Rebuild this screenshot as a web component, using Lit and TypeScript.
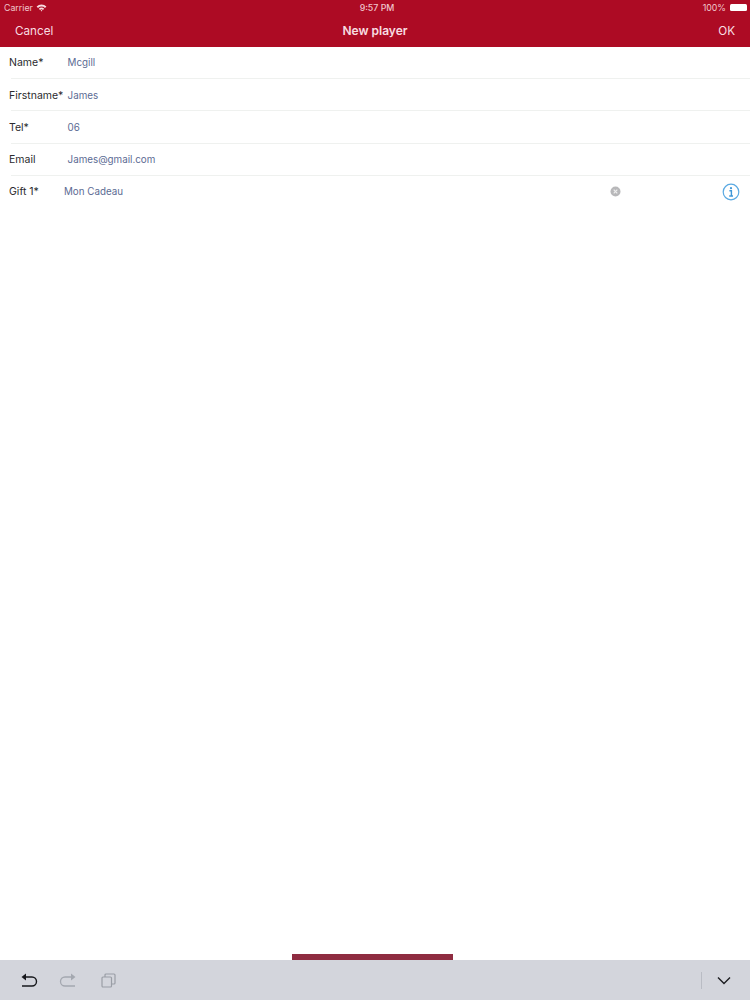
import { LitElement, html, css } from "lit";
import { customElement } from "lit/decorators.js";

const rows = [
  ["Name*", "Mcgill"],
  ["Firstname*", "James"],
  ["Tel*", "06"],
  ["Email", "James@gmail.com"],
];

@customElement("app-root")
export class AppRoot extends LitElement {
  static styles = css`
    :host {
      display: flex;
      flex-direction: column;
      height: 1000px;
      width: 750px;
      background: #fff;
      font-family: Inter, "Liberation Sans", sans-serif;
      overflow: hidden;
    }
    .header {
      background: #ad0b24;
      height: 47px;
      box-sizing: border-box;
      color: #f8dde1;
      display: flex;
      flex-direction: column;
    }
    .status {
      height: 15px;
      padding: 0 2px 0 4px;
      display: flex;
      align-items: center;
      font-size: 8.8px;
      position: relative;
      justify-content: space-between;
      color: #f0c6cc;
    }
    .status-left, .status-right { display: flex; align-items: center; gap: 3px; }
    .clock {
      position: absolute;
      left: 4px;
      right: 0;
      text-align: center;
      font-weight: 500;
    }
    .battery {
      width: 17px;
      height: 7px;
      background: #fff;
      border-radius: 1.5px;
      margin-left: 1px;
      margin-right: 1px;
    }
    .nav {
      flex: 1;
      display: flex;
      align-items: center;
      justify-content: space-between;
      padding: 0 15px 1px 15px;
      font-size: 11.7px;
      position: relative;
    }
    .title {
      position: absolute;
      left: 0;
      right: 0;
      text-align: center;
      font-weight: 600;
      font-size: 12px;
    }
    .form { flex: 1; padding-top: 0.1px; }
    .row {
      height: 32.2px;
      display: flex;
      align-items: center;
      font-size: 10.5px;
      position: relative;
      box-sizing: border-box;
      padding-left: 9px;
      padding-bottom: 0.6px;
    }
    .row.line::after {
      content: "";
      position: absolute;
      left: 11px;
      right: 0;
      bottom: 0;
      height: 1px;
      background: #eff1ef;
    }
    .label { width: 58.6px; color: #2a2a2e; flex: none; }
    .value { color: #5b6b93; font-size: 9.8px; }
    .gift .label { width: 55px; }
    .clear { position: absolute; left: 610px; top: 10px; }
    .info { position: absolute; left: 722px; top: 7px; }
    .toolbar {
      height: 40px;
      background: #d3d5dc;
      position: relative;
      display: flex;
      align-items: center;
      padding: 0 19px 0 20px;
      gap: 22px;
    }
    .handle {
      position: absolute;
      left: 292px;
      bottom: 100%;
      width: 161px;
      height: 6px;
      background: #8f2c41;
    }
    .spacer { flex: 1; }
    .divider { width: 1px; height: 17px; background: #b9bcc4; margin-right: -7px; }
    .redo { margin-left: -1px; }
    .copy { margin-left: 2px; }
    svg { display: block; fill: none; }
  `;

  render() {
    return html`
      <div class="header">
        <div class="status">
          <div class="status-left">
            <span>Carrier</span>
            <svg width="11" height="8" viewBox="0 0 11 8">
              <path d="M0.6 2.6 A7 7 0 0 1 10.4 2.6 L9 4 A5 5 0 0 0 2 4 Z" fill="#f9dde1"></path>
              <path d="M2.8 4.7 A4 4 0 0 1 8.2 4.7 L7 5.9 A2.4 2.4 0 0 0 4 5.9 Z" fill="#f9dde1"></path>
              <path d="M4.6 6.5 A1.3 1.3 0 0 1 6.4 6.5 L5.5 7.6 Z" fill="#f9dde1"></path>
            </svg>
          </div>
          <div class="clock">9:57 PM</div>
          <div class="status-right">
            <span>100%</span>
            <div class="battery"></div>
          </div>
        </div>
        <div class="nav">
          <span>Cancel</span>
          <span class="title">New player</span>
          <span>OK</span>
        </div>
      </div>
      <div class="form">
        ${rows.map(
          ([l, v]) => html`<div class="row line">
            <span class="label">${l}</span><span class="value">${v}</span>
          </div>`
        )}
        <div class="row gift">
          <span class="label">Gift 1*</span><span class="value">Mon Cadeau</span>
          <svg class="clear" width="11" height="11" viewBox="0 0 11 11">
            <circle cx="5.5" cy="5.5" r="5" fill="#b8b8ba"></circle>
            <path d="M3.7 3.7 L7.3 7.3 M7.3 3.7 L3.7 7.3" stroke="#eee" stroke-width="1.2"></path>
          </svg>
          <svg class="info" width="18" height="18" viewBox="0 0 18 18">
            <circle cx="9" cy="9" r="7.8" stroke="#5aa9e2" stroke-width="1.2"></circle>
            <circle cx="9" cy="5.2" r="1.1" fill="#3f97d8"></circle>
            <path d="M7.4 7.8 H9.4 V12.8 M7.2 13 H11" stroke="#3f97d8" stroke-width="1.4"></path>
          </svg>
        </div>
      </div>
      <div class="toolbar">
        <div class="handle"></div>
        <svg width="18" height="16" viewBox="0 0 18 16">
          <path d="M4 5 H12 A4.5 4.5 0 0 1 12 14 H2" stroke="#17181c" stroke-width="1.4"></path>
          <path d="M1.5 5 L6 1.6 V8.4 Z" fill="#17181c"></path>
        </svg>
        <svg class="redo" width="18" height="16" viewBox="0 0 18 16">
          <path d="M14 5 H6 A4.5 4.5 0 0 0 6 14 H16" stroke="#a4a8b0" stroke-width="1.3"></path>
          <path d="M16.5 5 L12 1.6 V8.4 Z" fill="#a4a8b0"></path>
        </svg>
        <svg class="copy" width="15" height="15" viewBox="0 0 15 15">
          <rect x="1" y="4" width="9.5" height="10" rx="1" stroke="#9a9ea6" stroke-width="1.2"></rect>
          <path d="M4 4 V2 A1 1 0 0 1 5 1 H13 A1 1 0 0 1 14 2 V10 A1 1 0 0 1 13 11 H10.5" stroke="#9a9ea6" stroke-width="1.2"></path>
        </svg>
        <div class="spacer"></div>
        <div class="divider"></div>
        <svg width="14" height="9" viewBox="0 0 14 9">
          <path d="M1 1.5 L7 7.5 L13 1.5" stroke="#1d1e22" stroke-width="1.4"></path>
        </svg>
      </div>
    `;
  }
}
